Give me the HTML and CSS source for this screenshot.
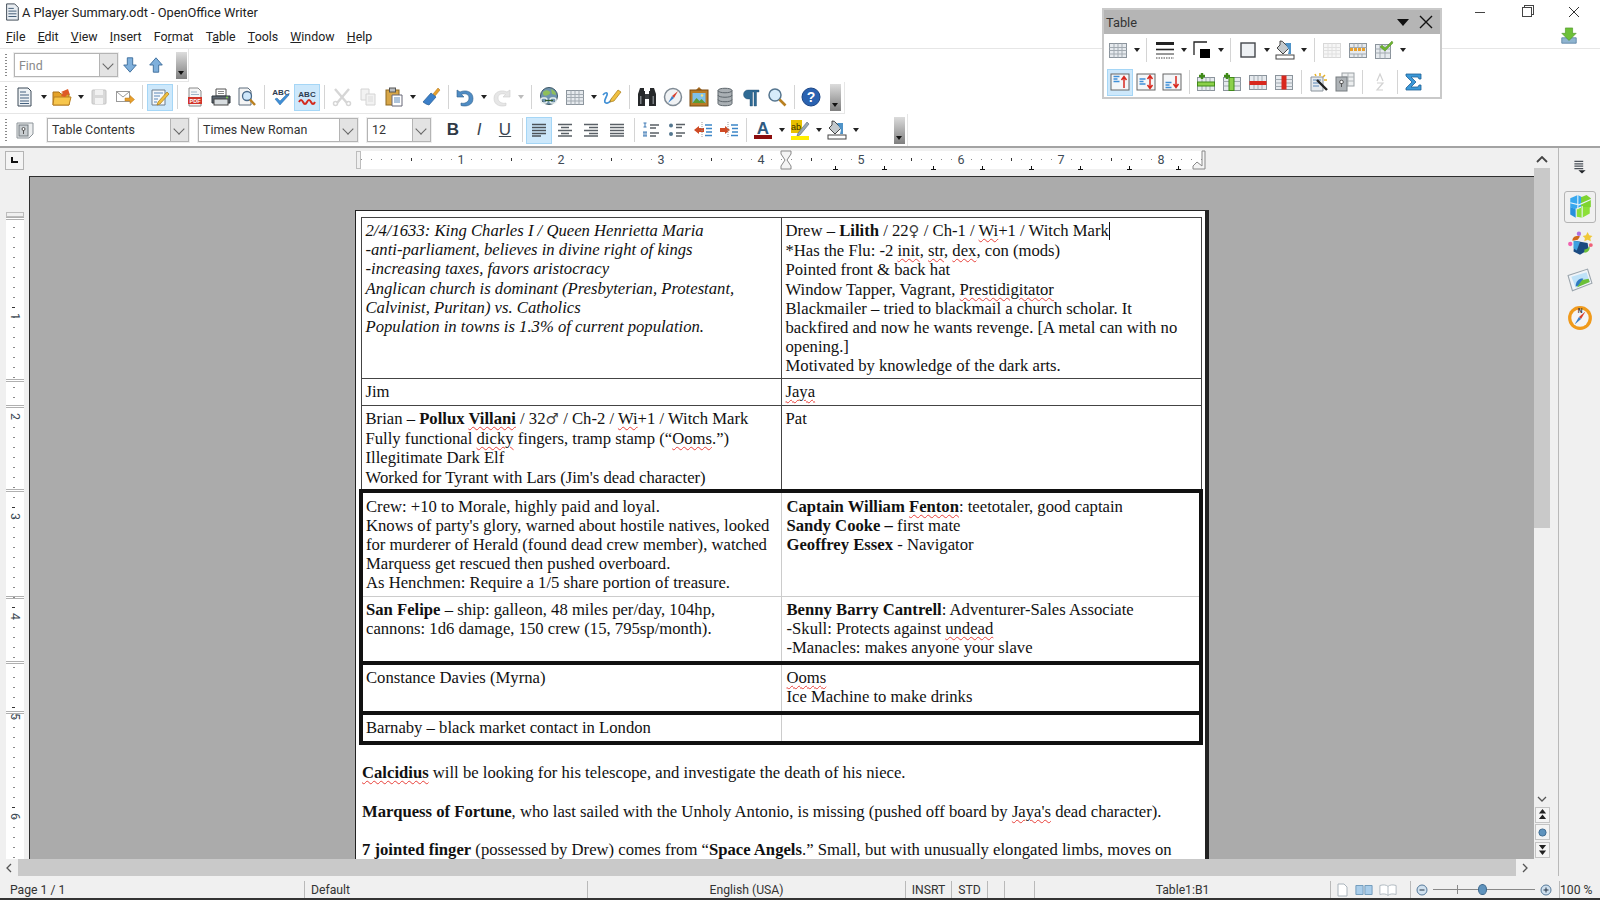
FILE: index.html
```html
<!DOCTYPE html>
<html lang="en">

<head>
    <meta charset="UTF-8">
    <title>A Player Summary.odt - OpenOffice Writer</title>
    <link rel="stylesheet" href="styles.css">
</head>

<body>
    <!-- icon sprite -->
    <svg class="sprite" xmlns="http://www.w3.org/2000/svg">
        <symbol id="i-new" viewBox="0 0 20 20"><path d="M3 1h10l3 3v15H3z" fill="#eef2f5" stroke="#3c4a58"/><path d="M5 5h6M5 8h9M5 11h9M5 14h9M5 16.500h9" stroke="#44617f"/></symbol>
        <symbol id="i-open" viewBox="0 0 20 20"><path d="M1 5h6l2 2h8v11H1z" fill="#e5a228" stroke="#a8701a"/><path d="M2 10h17l-2 8H1z" fill="#f7c64c" stroke="#b98020"/><path d="M9 9l2-3-2-1 7-3 2 6-2-1-3 3z" fill="#de5a26"/></symbol>
        <symbol id="i-save" viewBox="0 0 20 20"><rect x="3" y="3" width="14" height="14" rx="1" fill="#d9d9d9" stroke="#c4c4c4"/><rect x="6" y="3" width="8" height="5" fill="#f1f1f1"/><rect x="6" y="11" width="8" height="6" fill="#f4f4f4"/></symbol>
        <symbol id="i-mail" viewBox="0 0 20 20"><rect x="1.500" y="4.500" width="13" height="10" fill="#fff" stroke="#9a9a9a"/><path d="M2 5l6 5 6-5" fill="none" stroke="#9a9a9a"/><path d="M10 11h5V8.500l4.500 4-4.500 4V14h-5z" fill="#e8a02c" stroke="#b87818" stroke-width=".5"/></symbol>
        <symbol id="i-edit" viewBox="0 0 20 20"><path d="M2 3h13v15H2z" fill="#f5f8fb" stroke="#6c7c8c"/><path d="M4 6h9M4 9h6M4 12h4M4 15h3" stroke="#5b87b8"/><path d="M8 15l9-10 2 2-9 10-3 1z" fill="#f0c040" stroke="#a87a18" stroke-width=".7"/></symbol>
        <symbol id="i-pdf" viewBox="0 0 20 20"><path d="M4 1h9l3 3v15H4z" fill="#f6f6f6" stroke="#8a8a8a"/><path d="M6 5h6M6 7.500h8" stroke="#9fb4c8"/><rect x="3" y="10" width="14" height="7" fill="#d2352a"/><text x="10" y="15.500" font-size="5.500" font-weight="700" fill="#fff" text-anchor="middle" font-family="Liberation Sans, sans-serif">PDF</text></symbol>
        <symbol id="i-print" viewBox="0 0 20 20"><path d="M5 2h10v7H5z" fill="#fff" stroke="#555"/><path d="M7 4.500h6M7 6.500h6" stroke="#888"/><path d="M1 9h18v7H1z" fill="#5c6670" stroke="#2f363c"/><rect x="3" y="12" width="14" height="6" fill="#d8dde0" stroke="#444"/><circle cx="16" cy="10.500" r="1" fill="#7ad04a"/></symbol>
        <symbol id="i-preview" viewBox="0 0 20 20"><path d="M2 1h9l3 3v14H2z" fill="#f5f5f5" stroke="#5f6f7f"/><circle cx="10" cy="9" r="4.500" fill="#cfe7fa" stroke="#4a6a8a" stroke-width="1.300"/><path d="M13 12.500l5 5.500" stroke="#b98020" stroke-width="2.400"/></symbol>
        <symbol id="i-spell" viewBox="0 0 20 20"><text x="10" y="8" font-size="8" font-weight="700" fill="#2c3c50" text-anchor="middle" font-family="Liberation Sans, sans-serif">ABC</text><path d="M4 12l5 6 9-10-2-1-7 7-3-3z" fill="#3f8fd6" stroke="#2a6aa8" stroke-width=".5"/></symbol>
        <symbol id="i-autospell" viewBox="0 0 20 20"><text x="10" y="10" font-size="8" font-weight="700" fill="#2c3c50" text-anchor="middle" font-family="Liberation Sans, sans-serif">ABC</text><path d="M2 15q2-4 4 0t4 0 4 0 4 0" fill="none" stroke="#d42a1e" stroke-width="2"/></symbol>
        <symbol id="i-cut" viewBox="0 0 20 20"><path d="M3 2l12 14M17 2L5 16" stroke="#d6d6d6" stroke-width="2.400"/><circle cx="3.500" cy="16.500" r="2" fill="none" stroke="#d6d6d6" stroke-width="1.500"/><circle cx="16.500" cy="16.500" r="2" fill="none" stroke="#d6d6d6" stroke-width="1.500"/></symbol>
        <symbol id="i-copy" viewBox="0 0 20 20"><path d="M3 2h8v11H3z" fill="#f2f2f2" stroke="#d4d4d4"/><path d="M8 7h9v11H8z" fill="#f2f2f2" stroke="#d4d4d4"/><path d="M10 10h5M10 12h5M10 14h5" stroke="#dcdcdc"/></symbol>
        <symbol id="i-paste" viewBox="0 0 20 20"><rect x="2" y="3" width="13" height="15" fill="#d7a648" stroke="#8d6820"/><rect x="5.500" y="1" width="6" height="4" fill="#b8bcc0" stroke="#555"/><path d="M8 8h10v11H8z" fill="#fff" stroke="#667"/><path d="M10 11h6M10 13h6M10 15h6" stroke="#5b87b8"/></symbol>
        <symbol id="i-brush" viewBox="0 0 20 20"><path d="M12 7l5-6 2 2-5 6z" fill="#e8a02c" stroke="#a87018" stroke-width=".5"/><path d="M2 15l8-9 5 4-7 8-3-1z" fill="#3b7fc8" stroke="#235a94" stroke-width=".7"/></symbol>
        <symbol id="i-undo" viewBox="0 0 20 20"><path d="M2 3v7h7L6.500 7.500C9 6 14 6.500 14 11s-5 6-8 5v2.500c5 1.500 12 0 12-7C18 4 10 2.500 5 5z" fill="#4f8cc4" stroke="#2f5f8c" stroke-width=".6"/></symbol>
        <symbol id="i-redo" viewBox="0 0 20 20"><path d="M18 3v7h-7l2.500-2.500C11 6 6 6.500 6 11s5 6 8 5v2.500c-5 1.500-12 0-12-7C2 4 10 2.500 15 5z" fill="#e6e6e6" stroke="#cfcfcf" stroke-width=".6"/></symbol>
        <symbol id="i-globe" viewBox="0 0 20 20"><circle cx="10" cy="9" r="8.500" fill="#6f94ae" stroke="#3c5664"/><path d="M4 5q3-3 6-1t-1 4-5-1zM12 2q5 2 5 6l-4-1z" fill="#8fbf5a"/><rect x="2" y="11" width="6" height="5" rx="2" fill="none" stroke="#e8f0f0" stroke-width="1.400"/><rect x="11" y="11" width="6" height="5" rx="2" fill="none" stroke="#e8f0f0" stroke-width="1.400"/><path d="M6 13.500h8" stroke="#2f5a2a" stroke-width="1.300"/></symbol>
        <symbol id="i-table" viewBox="0 0 20 20"><rect x="1.500" y="3.500" width="17" height="14" fill="#e6eaee" stroke="#8b949c"/><path d="M1.500 7.500h17M1.500 10.500h17M1.500 14h17M6 3.500v14M10 3.500v14M14 3.500v14" stroke="#a3abb2"/></symbol>
        <symbol id="i-draw" viewBox="0 0 20 20"><path d="M1 8c2-3 5-3 4 0s-4 7-1 8 5-3 7-5" fill="none" stroke="#3f8fd6" stroke-width="1.700"/><path d="M9 12l7-9 3 2-7 9-4 1z" fill="#f0c040" stroke="#a87a18" stroke-width=".7"/></symbol>
        <symbol id="i-binoc" viewBox="0 0 20 20"><path d="M3 1h4v3h1v15H1V7zM17 1h-4v3h-1v15h7V7z" fill="#26282a"/><rect x="8" y="7" width="4" height="5" fill="#3c3f42"/><path d="M3 9h1.500v8H3zM15.500 9H17v8h-1.500z" fill="#7b8084"/></symbol>
        <symbol id="i-compass" viewBox="0 0 20 20"><circle cx="10" cy="10" r="8.500" fill="#f0f2f4" stroke="#7f8a94" stroke-width="1.500"/><path d="M15 4l-6 5 2 2z" fill="#d8402f"/><path d="M5 16l4-7 2 2z" fill="#3b7fc8"/></symbol>
        <symbol id="i-gallery" viewBox="0 0 20 20"><path d="M10 0l3 3H7z" fill="#a66a20"/><rect x="1" y="3" width="18" height="16" fill="#b87a26" stroke="#7a4a10"/><rect x="3.500" y="6" width="13" height="10" fill="#7fc0ea"/><path d="M3.500 16l4-5 3 3 2-2 4 4z" fill="#5a9a34"/><circle cx="13" cy="8.500" r="1.200" fill="#f6e27a"/></symbol>
        <symbol id="i-db" viewBox="0 0 20 20"><path d="M3 3.500C3 .5 17 .5 17 3.500v13c0 3-14 3-14 0z" fill="#aab0b4" stroke="#5e666c"/><path d="M3 3.500c0 3 14 3 14 0M3 8c0 3 14 3 14 0M3 12.500c0 3 14 3 14 0" fill="none" stroke="#5e666c"/></symbol>
        <symbol id="i-para" viewBox="0 0 20 20"><path d="M9 3H7a4.500 4.500 0 000 9h2v7h2.500V5H13v14h2.500V5H18V3z" fill="#2f6a94" stroke="#1e4a6c" stroke-width=".4"/></symbol>
        <symbol id="i-zoom" viewBox="0 0 20 20"><circle cx="8" cy="8" r="6" fill="#d6ebfa" stroke="#55758f" stroke-width="1.500"/><path d="M12.500 12.500l6 6" stroke="#b98020" stroke-width="2.600"/></symbol>
        <symbol id="i-help" viewBox="0 0 20 20"><circle cx="10" cy="10" r="9" fill="#2a62b0" stroke="#1a4484"/><text x="10" y="15" font-size="14" font-weight="700" fill="#fff" text-anchor="middle" font-family="Liberation Sans, sans-serif">?</text></symbol>
        <symbol id="i-style" viewBox="0 0 20 20"><path d="M2 3h16v11l-4 4H2z" fill="#eceeef" stroke="#8c9398"/><rect x="4" y="5" width="9" height="11" fill="#c8cdd0" stroke="#737a80"/><circle cx="8.500" cy="9" r="1.500" fill="#fff" stroke="#555"/><path d="M8.500 10v4" stroke="#555"/></symbol>
        <symbol id="i-left" viewBox="0 0 20 20"><path d="M3 4.500h14M3 7.500h14M3 10.500h14M3 13.500h14M3 16h9" stroke="#4b5258" stroke-width="1.400"/></symbol>
        <symbol id="i-center" viewBox="0 0 20 20"><path d="M3 4.500h14M6 7.500h8M3 10.500h14M6 13.500h8M3 16h14" stroke="#5a6066" stroke-width="1.400"/></symbol>
        <symbol id="i-right" viewBox="0 0 20 20"><path d="M3 4.500h14M8 7.500h9M3 10.500h14M8 13.500h9M3 16h14" stroke="#5a6066" stroke-width="1.400"/></symbol>
        <symbol id="i-just" viewBox="0 0 20 20"><path d="M3 4.500h14M3 7.500h14M3 10.500h14M3 13.500h14M3 16h14" stroke="#5a6066" stroke-width="1.400"/></symbol>
        <symbol id="i-num" viewBox="0 0 20 20"><path d="M4 3v4M2.500 3h3M2.500 7h3M3 12v4M5 12v4M2 12h4M2 16h4" stroke="#3c78b4"/><path d="M9 5h9M9 8h6M9 13h9M9 16h6" stroke="#5a6066" stroke-width="1.400"/></symbol>
        <symbol id="i-bullets" viewBox="0 0 20 20"><circle cx="4" cy="5.500" r="2" fill="#53768f"/><circle cx="4" cy="14" r="2" fill="#53768f"/><path d="M9 4.500h9M9 7.500h6M9 13h9M9 16h6" stroke="#5a6066" stroke-width="1.400"/></symbol>
        <symbol id="i-ind-minus" viewBox="0 0 20 20"><path d="M1 10l5-4v2h5v4H6v2z" fill="#cf4a24"/><path d="M9 2v16" stroke="#999" stroke-dasharray="1 1"/><path d="M12 5h7M13 8.500h6M13 12h6M12 15.500h7" stroke="#3c86c8" stroke-width="1.500"/></symbol>
        <symbol id="i-ind-plus" viewBox="0 0 20 20"><path d="M11 10L6 6v2H1v4h5v2z" fill="#cf4a24"/><path d="M9 2v16" stroke="#999" stroke-dasharray="1 1"/><path d="M12 5h7M13 8.500h6M13 12h6M12 15.500h7" stroke="#3c86c8" stroke-width="1.500"/></symbol>
        <symbol id="i-fontcolor" viewBox="0 0 20 20"><text x="10" y="14" font-size="17" font-weight="700" fill="#2f5a80" text-anchor="middle" font-family="Liberation Sans, sans-serif">A</text><rect x="1" y="15" width="18" height="4" fill="#8c0d0d"/></symbol>
        <symbol id="i-hilite" viewBox="0 0 20 20"><rect x="1" y="0" width="11" height="13" fill="#e8c000"/><text x="6" y="10" font-size="9" fill="#3a3000" text-anchor="middle" font-family="Liberation Sans, sans-serif">ab</text><path d="M8 13l9-11 2 2-9 11-3 1z" fill="#98a8b4" stroke="#5a6670" stroke-width=".6"/><rect x="1" y="16" width="18" height="4" fill="#ffee00"/></symbol>
        <symbol id="i-bgfill" viewBox="0 0 20 20"><path d="M5 1a4 4 0 014 2l5 5-6 6-6-6 3-3z" fill="#c4c9cc" stroke="#444"/><path d="M10 3h6v11h-3l1-4z" fill="#4f93c8"/><rect x="1" y="15" width="18" height="4" fill="#fff" stroke="#444"/></symbol>
        <symbol id="i-lines" viewBox="0 0 20 20"><path d="M1 3.500h18" stroke="#222" stroke-width="3"/><path d="M1 9.500h18" stroke="#222" stroke-width="1.600"/><path d="M1 14h18" stroke="#333"/><path d="M1 18h18" stroke="#444" stroke-dasharray="1.500 1"/></symbol>
        <symbol id="i-linecolor" viewBox="0 0 20 20"><path d="M2 15V2h13" fill="none" stroke="#222" stroke-width="1.300"/><path d="M4 4h11v9H4z" fill="#fff"/><rect x="8" y="9" width="10" height="9" fill="#000"/></symbol>
        <symbol id="i-border" viewBox="0 0 20 20"><rect x="3" y="3" width="14" height="14" fill="#eef1f4" stroke="#43474b" stroke-width="1.400"/></symbol>
        <symbol id="i-merge" viewBox="0 0 20 20"><rect x="1.500" y="3.500" width="17" height="14" fill="#f6f6f6" stroke="#d8d8d8"/><path d="M1.500 7.500h17M1.500 10.500h17M1.500 14h17M6 3.500v14M10 3.500v14M14 3.500v14" stroke="#e0e0e0"/></symbol>
        <symbol id="i-split" viewBox="0 0 20 20"><rect x="1.500" y="3.500" width="17" height="14" fill="#e6eaee" stroke="#8b949c"/><path d="M1.500 7.500h17M1.500 14h17M6 3.500v4M10 3.500v4M14 3.500v4M6 14v3.500M10 14v3.500M14 14v3.500" stroke="#a3abb2"/><path d="M2 9.500h16" stroke="#e8a02c" stroke-width="3" stroke-dasharray="3 1"/></symbol>
        <symbol id="i-optimize" viewBox="0 0 20 20"><rect x="1.500" y="4.500" width="15" height="14" fill="#e6eaee" stroke="#8b949c"/><path d="M1.500 9h15M1.500 13h15M6 4.500v14M11 4.500v14" stroke="#a3abb2"/><path d="M8 5l3 3 7-7 1 2-8 8-5-4z" fill="#6cb52e" stroke="#3f7a14" stroke-width=".4"/></symbol>
        <symbol id="i-top" viewBox="0 0 20 20"><rect x="1" y="2" width="18" height="16" fill="#f4f6f8" stroke="#666"/><path d="M3.500 4.500h6M3.500 7h4M3.500 9.500h6" stroke="#3f8fd6" stroke-width="1.300"/><path d="M14 16V6M11.500 8L14 4.500 16.500 8" fill="none" stroke="#d8281e" stroke-width="1.500"/></symbol>
        <symbol id="i-mid" viewBox="0 0 20 20"><rect x="1" y="2" width="18" height="16" fill="#f4f6f8" stroke="#666"/><path d="M3.500 7h6M3.500 9.500h4M3.500 12h6" stroke="#3f8fd6" stroke-width="1.300"/><path d="M14 4.500v11M11.500 7L14 3.500 16.500 7M11.500 13L14 16.500 16.500 13" fill="none" stroke="#d8281e" stroke-width="1.500"/></symbol>
        <symbol id="i-bottom" viewBox="0 0 20 20"><rect x="1" y="2" width="18" height="16" fill="#f4f6f8" stroke="#666"/><path d="M3.500 10.500h6M3.500 13h4M3.500 15.500h6" stroke="#3f8fd6" stroke-width="1.300"/><path d="M14 4v10M11.500 12L14 15.500 16.500 12" fill="none" stroke="#d8281e" stroke-width="1.500"/></symbol>
        <symbol id="i-insrow" viewBox="0 0 20 20"><rect x="1.500" y="5.500" width="17" height="13" fill="#e6eaee" stroke="#8b949c"/><path d="M6 5.500v13M10 5.500v13M14 5.500v13" stroke="#a3abb2"/><rect x="1.500" y="10" width="17" height="4" fill="#8cd04a" stroke="#3f8a18"/><path d="M3 4h6M6 1v6" stroke="#3f8a18" stroke-width="2.400"/></symbol>
        <symbol id="i-inscol" viewBox="0 0 20 20"><rect x="1.500" y="5.500" width="17" height="13" fill="#e6eaee" stroke="#8b949c"/><path d="M1.500 9.500h17M1.500 14h17" stroke="#a3abb2"/><rect x="7" y="5.500" width="5" height="13" fill="#8cd04a" stroke="#3f8a18"/><path d="M2 4h6M5 1v6" stroke="#3f8a18" stroke-width="2.400"/></symbol>
        <symbol id="i-delrow" viewBox="0 0 20 20"><rect x="1.500" y="3.500" width="17" height="14" fill="#e6eaee" stroke="#8b949c"/><path d="M6 3.500v14M10 3.500v14M14 3.500v14" stroke="#a3abb2"/><rect x="1.500" y="9" width="17" height="4" fill="#d8281e"/></symbol>
        <symbol id="i-delcol" viewBox="0 0 20 20"><rect x="1.500" y="3.500" width="17" height="14" fill="#e6eaee" stroke="#8b949c"/><path d="M1.500 7.500h17M1.500 11h17M1.500 14.500h17" stroke="#a3abb2"/><rect x="7.500" y="3.500" width="5" height="14" fill="#d8281e"/></symbol>
        <symbol id="i-wand" viewBox="0 0 20 20"><path d="M2 5h12v14H2z" fill="#e6eaee" stroke="#8b949c"/><path d="M4 8h8M4 11h8M4 14h6" stroke="#5b87b8"/><path d="M8 8l10 10" stroke="#222" stroke-width="2.400"/><path d="M6 2l1 2M11 1v3M16 3l-2 2M18 8h-3" stroke="#e8b020" stroke-width="1.500"/></symbol>
        <symbol id="i-props" viewBox="0 0 20 20"><rect x="7" y="1" width="12" height="13" fill="#eceeef" stroke="#9aa0a4"/><path d="M7 5h12M7 9h12M13 1v13" stroke="#b0b5b8"/><rect x="1" y="5" width="11" height="14" fill="#aeb3b7" stroke="#767c80"/><circle cx="6.500" cy="10" r="1.800" fill="#fff" stroke="#555"/><path d="M6.500 11v4" stroke="#555"/></symbol>
        <symbol id="i-sort" viewBox="0 0 20 20"><path d="M7 9l3-7 3 7M7 11h6l-6 7h6" fill="none" stroke="#d2d2d2" stroke-width="1.200"/></symbol>
        <symbol id="i-sum" viewBox="0 0 20 20"><path d="M2 2h15v5h-2l-1-2H7l5 5-5 5h7l1-2h2v5H2v-2l6-6-6-6z" fill="#3a98d8" stroke="#1f5f94" stroke-width=".8"/></symbol>
        <symbol id="i-app" viewBox="0 0 20 20"><path d="M4 1h9l4 4v14H4z" fill="#e8edf2" stroke="#34404c"/><path d="M6 6h6M6 9h9M6 12h9M6 15h9" stroke="#34506c"/></symbol>
        <symbol id="i-update" viewBox="0 0 20 20"><path d="M2 12h16v6H2z" fill="#8fb4d0" stroke="#5d86a6"/><path d="M6 1h8v6h4l-8 8-8-8h4z" fill="#6cc038" stroke="#3f8a18" stroke-width=".6"/></symbol>
        <symbol id="i-deck-menu" viewBox="0 0 20 20"><path d="M3 3h11M3 6h11M3 9h11M3 12h11" stroke="#4a5058" stroke-width="1.500"/><path d="M8 14h9l-4.500 4z" fill="#22262a"/></symbol>
        <symbol id="i-props-deck" viewBox="0 0 24 24"><path d="M3 4l7-3 4 2v8l-7 3-4-2z" fill="#38a8ee"/><path d="M13 3l5-2 4 3v8l-8 3-1-2z" fill="#7ed430"/><path d="M3 12l5 2v8l-5-3z" fill="#2690dc"/><path d="M9 14l6-2 6 0v6l-7 4-5-1z" fill="#8ce038"/><path d="M10 1v13M3 8l8 2 11-5M14 11v11" stroke="#e8f4fa" fill="none"/></symbol>
        <symbol id="i-styles-deck" viewBox="0 0 24 24"><path d="M7 9l12 2 1 6-8 5-6-3z" fill="#1a4a80"/><path d="M6 9l6 1-3 8-3-2z" fill="#3da0e0"/><path d="M16 17c4 0 5-3 4-5 2 3 1 8-4 8z" fill="#6cc038"/><path d="M5 9c0-4 4-5 7-4l-2 3z" fill="#d06a1c"/><circle cx="3" cy="12" r="2" fill="#f060b0"/><circle cx="11" cy="2.500" r="2" fill="#b070e0"/><path d="M19 1l1.500 3 3 .5-2 2 .5 3-3-1.500-3 1.500.5-3-2-2 3-.5z" fill="#f0c838"/><circle cx="22" cy="13" r="1.800" fill="#f06078"/></symbol>
        <symbol id="i-gallery-deck" viewBox="0 0 24 24"><path d="M1 7l18-6 4 13-18 7z" fill="#f0f4f8" stroke="#9aa4ac"/><path d="M4 8l14-4 3 9-13 5z" fill="#bfe2f8"/><path d="M8 17c0-6 5-8 7-7l-3 6z" fill="#2f7ac0"/><path d="M9 18l12-5-1-3-6 1z" fill="#6cc038"/></symbol>
        <symbol id="i-nav-deck" viewBox="0 0 24 24"><circle cx="12" cy="12" r="11" fill="#f09a1c"/><circle cx="12" cy="12" r="8" fill="#f4f4f6"/><path d="M17 6l-6 5 2 2z" fill="#d8402f"/><path d="M7 18l4-7 2 2z" fill="#3b7fc8"/><text x="12" y="7.500" font-size="6" font-weight="700" fill="#333" text-anchor="middle" font-family="Liberation Sans, sans-serif">N</text></symbol>
    </svg>

    <div class="titlebar">
        <svg class="app-icon"><use href="#i-app"/></svg>
        <span class="title">A Player Summary.odt - OpenOffice Writer</span>
        <div class="win-controls">
            <span class="win-btn"><span class="win-min"></span></span>
            <span class="win-btn"><span class="win-restore"></span></span>
            <span class="win-btn"><svg class="win-close" viewBox="0 0 12 12"><path d="M1 1l10 10M11 1L1 11" stroke="#333"/></svg></span>
        </div>
    </div>

    <div class="menubar">
        <span class="menu-item"><u>F</u>ile</span>
        <span class="menu-item"><u>E</u>dit</span>
        <span class="menu-item"><u>V</u>iew</span>
        <span class="menu-item"><u>I</u>nsert</span>
        <span class="menu-item">Fo<u>r</u>mat</span>
        <span class="menu-item">T<u>a</u>ble</span>
        <span class="menu-item"><u>T</u>ools</span>
        <span class="menu-item"><u>W</u>indow</span>
        <span class="menu-item"><u>H</u>elp</span>
        <svg class="update-icon"><use href="#i-update"/></svg>
    </div>

    <div class="toolbar find-bar">
        <span class="grip"></span>
        <span class="combo find-combo"><span class="combo-text muted">Find</span><span class="combo-btn"></span></span>
        <span class="tb"><svg class="arrow-icon" viewBox="0 0 20 20"><path d="M7 2h6v8h4l-7 8-7-8h4z" fill="#7fb0dc" stroke="#3a6a98"/></svg></span>
        <span class="tb"><svg class="arrow-icon" viewBox="0 0 20 20"><path d="M7 18h6v-8h4l-7-8-7 8h4z" fill="#7fb0dc" stroke="#3a6a98"/></svg></span>
        <span class="handle"></span>
    </div>

    <div class="toolbar std-bar">
        <span class="grip"></span>
        <span class="tb"><svg><use href="#i-new"/></svg></span><span class="drop"></span>
        <span class="tb"><svg><use href="#i-open"/></svg></span><span class="drop"></span>
        <span class="tb"><svg><use href="#i-save"/></svg></span>
        <span class="tb"><svg><use href="#i-mail"/></svg></span>
        <span class="sep w9"></span>
        <span class="tb on"><svg><use href="#i-edit"/></svg></span>
        <span class="sep w9"></span>
        <span class="tb"><svg><use href="#i-pdf"/></svg></span>
        <span class="tb"><svg><use href="#i-print"/></svg></span>
        <span class="tb"><svg><use href="#i-preview"/></svg></span>
        <span class="sep"></span>
        <span class="tb"><svg><use href="#i-spell"/></svg></span>
        <span class="tb on"><svg><use href="#i-autospell"/></svg></span>
        <span class="sep w9"></span>
        <span class="tb"><svg><use href="#i-cut"/></svg></span>
        <span class="tb"><svg><use href="#i-copy"/></svg></span>
        <span class="tb"><svg><use href="#i-paste"/></svg></span><span class="drop"></span>
        <span class="tb"><svg><use href="#i-brush"/></svg></span>
        <span class="sep"></span>
        <span class="tb"><svg><use href="#i-undo"/></svg></span><span class="drop"></span>
        <span class="tb"><svg><use href="#i-redo"/></svg></span><span class="drop drop-off"></span>
        <span class="sep w10"></span>
        <span class="tb"><svg><use href="#i-globe"/></svg></span>
        <span class="tb"><svg><use href="#i-table"/></svg></span><span class="drop"></span>
        <span class="tb"><svg><use href="#i-draw"/></svg></span>
        <span class="sep w9"></span>
        <span class="tb"><svg><use href="#i-binoc"/></svg></span>
        <span class="tb"><svg><use href="#i-compass"/></svg></span>
        <span class="tb"><svg><use href="#i-gallery"/></svg></span>
        <span class="tb"><svg><use href="#i-db"/></svg></span>
        <span class="tb"><svg><use href="#i-para"/></svg></span>
        <span class="tb"><svg><use href="#i-zoom"/></svg></span>
        <span class="sep"></span>
        <span class="tb"><svg><use href="#i-help"/></svg></span>
        <span class="handle"></span>
    </div>

    <div class="toolbar fmt-bar">
        <span class="grip"></span>
        <span class="tb"><svg><use href="#i-style"/></svg></span>
        <span class="combo style-combo"><span class="combo-text">Table Contents</span><span class="combo-btn"></span></span>
        <span class="combo font-combo"><span class="combo-text">Times New Roman</span><span class="combo-btn"></span></span>
        <span class="combo size-combo"><span class="combo-text">12</span><span class="combo-btn"></span></span>
        <span class="tb fmt-letter first-letter"><b>B</b></span>
        <span class="tb fmt-letter"><i>I</i></span>
        <span class="tb fmt-letter"><u>U</u></span>
        <span class="sep"></span>
        <span class="tb on"><svg><use href="#i-left"/></svg></span>
        <span class="tb"><svg><use href="#i-center"/></svg></span>
        <span class="tb"><svg><use href="#i-right"/></svg></span>
        <span class="tb"><svg><use href="#i-just"/></svg></span>
        <span class="sep"></span>
        <span class="tb"><svg><use href="#i-num"/></svg></span>
        <span class="tb"><svg><use href="#i-bullets"/></svg></span>
        <span class="tb"><svg><use href="#i-ind-minus"/></svg></span>
        <span class="tb"><svg><use href="#i-ind-plus"/></svg></span>
        <span class="sep"></span>
        <span class="tb"><svg><use href="#i-fontcolor"/></svg></span><span class="drop"></span>
        <span class="tb"><svg><use href="#i-hilite"/></svg></span><span class="drop"></span>
        <span class="tb"><svg><use href="#i-bgfill"/></svg></span><span class="drop"></span>
        <span class="handle"></span>
    </div>

    <!-- floating Table toolbar -->
    <div class="float-toolbar">
        <div class="float-title">
            <span>Table</span>
            <span class="float-menu"></span>
            <svg class="float-close" viewBox="0 0 14 14"><path d="M1 1l12 12M13 1L1 13" stroke="#111" stroke-width="1.400"/></svg>
        </div>
        <div class="float-row">
            <span class="tb"><svg><use href="#i-table"/></svg></span><span class="drop"></span>
            <span class="sep"></span>
            <span class="tb push2"><svg><use href="#i-lines"/></svg></span><span class="drop"></span>
            <span class="tb"><svg><use href="#i-linecolor"/></svg></span><span class="drop"></span>
            <span class="sep w9"></span>
            <span class="tb"><svg><use href="#i-border"/></svg></span><span class="drop"></span>
            <span class="tb"><svg><use href="#i-bgfill"/></svg></span><span class="drop"></span>
            <span class="sep w10"></span>
            <span class="tb"><svg><use href="#i-merge"/></svg></span>
            <span class="tb"><svg><use href="#i-split"/></svg></span>
            <span class="tb"><svg><use href="#i-optimize"/></svg></span><span class="drop"></span>
        </div>
        <div class="float-row second">
            <span class="tb on"><svg><use href="#i-top"/></svg></span>
            <span class="tb"><svg><use href="#i-mid"/></svg></span>
            <span class="tb"><svg><use href="#i-bottom"/></svg></span>
            <span class="sep"></span>
            <span class="tb"><svg><use href="#i-insrow"/></svg></span>
            <span class="tb"><svg><use href="#i-inscol"/></svg></span>
            <span class="tb"><svg><use href="#i-delrow"/></svg></span>
            <span class="tb"><svg><use href="#i-delcol"/></svg></span>
            <span class="sep w9"></span>
            <span class="tb"><svg><use href="#i-wand"/></svg></span>
            <span class="tb"><svg><use href="#i-props"/></svg></span>
            <span class="sep w9"></span>
            <span class="tb"><svg><use href="#i-sort"/></svg></span>
            <span class="sep"></span>
            <span class="tb"><svg><use href="#i-sum"/></svg></span>
        </div>
    </div>

    <div class="workspace">
        <div class="editor">
            <div class="editor-top">
                <div class="editor-main">
                    <div class="ruler-row">
                        <span class="corner-btn"><span class="corner-mark"></span></span>
                        <div class="h-ruler">
                            <span class="margin-box"></span>
                            <div class="h-numbers">
                                <span>1</span><span>2</span><span>3</span><span>4</span><span>5</span><span>6</span><span>7</span><span>8</span>
                            </div>
                            <div class="tab-stops">
                                <i></i><i></i><i></i><i></i><i></i><i></i><i></i><i></i>
                            </div>
                            <svg class="col-marker" viewBox="0 0 12 20"><path d="M1 1h10v3L7 10l4 6v3H1v-3l4-6-4-6z" fill="#f4f4f4" stroke="#888"/></svg>
                            <svg class="right-marker" viewBox="0 0 14 20"><path d="M10 1h3v18H1v-3l4-4 5 4z" fill="#f4f4f4" stroke="#888"/></svg>
                        </div>
                    </div>
                    <div class="doc-row">
                        <div class="v-ruler">
                            <div class="v-numbers">
                                <span>1</span><span>2</span><span>3</span><span>4</span><span>5</span><span>6</span>
                            </div>
                            <span class="v-sect s1"></span>
                            <span class="v-sect s2"></span>
                            <span class="v-sect s3"></span>
                            <span class="v-sect s4"></span>
                            <span class="v-sect s5"></span>
                            <span class="v-sect s6"></span>
                            <span class="v-sect s7"></span>
                            <span class="v-sect s8"></span>
                        </div>
                        <div class="doc-area">
                            <div class="page">
                                <table class="sheet">
                                    <tr class="r1">
                                        <td class="notes">2/4/1633: King Charles I / Queen Henrietta Maria<br>-anti-parliament, believes in divine right of kings<br>-increasing taxes, favors aristocracy<br>Anglican church is dominant (Presbyterian, Protestant,<br>Calvinist, Puritan) vs. Catholics<br>Population in towns is 1.3% of current population.</td>
                                        <td>Drew &ndash; <b>Lilith</b> / 22<span class="sym">&#9792;</span> / Ch-1 / <span class="sp">Wi</span>+1 / Witch Mark<span class="caret"></span><br>*Has the Flu: -2 <span class="sp">init</span>, <span class="sp">str</span>, <span class="sp">dex</span>, con (mods)<br>Pointed front &amp; back hat<br>Window Tapper, Vagrant, <span class="sp">Prestidigitator</span><br>Blackmailer &ndash; tried to blackmail a church scholar. It<br>backfired and now he wants revenge. [A metal can with no<br>opening.]<br>Motivated by knowledge of the dark arts.</td>
                                    </tr>
                                    <tr class="r2">
                                        <td>Jim</td>
                                        <td><span class="sp">Jaya</span></td>
                                    </tr>
                                    <tr class="r3">
                                        <td>Brian &ndash; <b>Pollux <span class="sp">Villani</span></b> / 32<span class="sym">&#9794;</span> / Ch-2 / <span class="sp">Wi</span>+1 / Witch Mark<br>Fully functional <span class="sp">dicky</span> fingers, tramp stamp (&ldquo;<span class="sp">Ooms</span>.&rdquo;)<br>Illegitimate Dark Elf<br>Worked for Tyrant with Lars (Jim's dead character)</td>
                                        <td>Pat</td>
                                    </tr>
                                    <tr class="r4 boxed">
                                        <td>Crew: +10 to Morale, highly paid and loyal.<br>Knows of party's glory, warned about hostile natives, looked<br>for murderer of Herald (found dead crew member), watched<br>Marquess get rescued then pushed overboard.<br>As Henchmen: Require a 1/5 share portion of treasure.</td>
                                        <td><b>Captain William <span class="sp">Fenton</span></b>: teetotaler, good captain<br><b>Sandy Cooke &ndash;</b> first mate<br><b>Geoffrey Essex</b> - Navigator</td>
                                    </tr>
                                    <tr class="r5 boxed">
                                        <td><b>San Felipe</b> &ndash; ship: galleon, 48 miles per/day, 104hp,<br>cannons: 1d6 damage, 150 crew (15, 795sp/month).</td>
                                        <td><b>Benny Barry Cantrell</b>: Adventurer-Sales Associate<br>-Skull: Protects against <span class="sp">undead</span><br>-Manacles: makes anyone your slave</td>
                                    </tr>
                                    <tr class="r6 boxed">
                                        <td>Constance Davies (Myrna)</td>
                                        <td><span class="sp">Ooms</span><br>Ice Machine to make drinks</td>
                                    </tr>
                                    <tr class="r7 boxed">
                                        <td>Barnaby &ndash; black market contact in London</td>
                                        <td></td>
                                    </tr>
                                </table>
                                <p class="para"><b class="sp">Calcidius</b> will be looking for his telescope, and investigate the death of his niece.</p>
                                <p class="para"><b>Marquess of Fortune</b>, who last sailed with the Unholy Antonio, is missing (pushed off board by <span class="sp">Jaya's</span> dead character).</p>
                                <p class="para"><b>7 jointed finger</b> (possessed by Drew) comes from &ldquo;<b>Space Angels</b>.&rdquo; Small, but with unusually elongated limbs, moves on</p>
                            </div>
                        </div>
                    </div>
                </div>
                <div class="v-scroll">
                    <span class="sb-arrow"><svg viewBox="0 0 12 7"><path d="M1 6l5-5 5 5" fill="none" stroke="#444" stroke-width="1.800"/></svg></span>
                    <span class="sb-thumb"></span>
                    <span class="sb-fill"></span>
                    <span class="sb-arrow sb-down"><svg viewBox="0 0 10 6"><path d="M1 1l4 4 4-4" fill="none" stroke="#555" stroke-width="1.300"/></svg></span>
                    <span class="nav-btn"><svg viewBox="0 0 10 12"><path d="M5 0l4 5H1zM5 6l4 5H1z" fill="#222"/></svg></span>
                    <span class="nav-btn"><svg viewBox="0 0 10 12"><circle cx="5" cy="6" r="4" fill="#5f93bd" stroke="#3a668c"/></svg></span>
                    <span class="nav-btn"><svg viewBox="0 0 10 12"><path d="M5 6L1 1h8zM5 12L1 7h8z" fill="#222"/></svg></span>
                </div>
            </div>
            <div class="h-scroll">
                <span class="hs-arrow"><svg viewBox="0 0 6 10"><path d="M5 1L1 5l4 4" fill="none" stroke="#555" stroke-width="1.300"/></svg></span>
                <span class="hs-track"></span>
                <span class="hs-arrow"><svg viewBox="0 0 6 10"><path d="M1 1l4 4-4 4" fill="none" stroke="#555" stroke-width="1.300"/></svg></span>
            </div>
        </div>
        <div class="sidebar">
            <svg class="deck-menu"><use href="#i-deck-menu"/></svg>
            <span class="deck-btn active"><svg><use href="#i-props-deck"/></svg></span>
            <span class="deck-btn"><svg><use href="#i-styles-deck"/></svg></span>
            <span class="deck-btn"><svg><use href="#i-gallery-deck"/></svg></span>
            <span class="deck-btn"><svg><use href="#i-nav-deck"/></svg></span>
        </div>
    </div>

    <div class="statusbar">
        <span class="st st-page">Page 1 / 1</span>
        <span class="st st-style">Default</span>
        <span class="st st-lang">English (USA)</span>
        <span class="st st-ins">INSRT</span>
        <span class="st st-sel">STD</span>
        <span class="st st-a"></span>
        <span class="st st-b"></span>
        <span class="st st-cell">Table1:B1</span>
        <span class="st st-views">
            <svg viewBox="0 0 14 14"><path d="M3 1h6l3 3v9H3z" fill="#fff" stroke="#aab4bc"/></svg>
            <svg class="wide" viewBox="0 0 20 14"><path d="M1 2h8v10H1zM11 2h8v10h-8z" fill="#a9cdea" stroke="#6b96b8"/></svg>
            <svg class="wide" viewBox="0 0 20 14"><path d="M10 3c-2-2-6-2-9-1v10c3-1 7-1 9 1 2-2 6-2 9-1V2c-3-1-7-1-9 1zM10 3v10" fill="#fff" stroke="#aab4bc"/></svg>
        </span>
        <span class="st st-zoom">
            <svg viewBox="0 0 12 12"><circle cx="6" cy="6" r="5" fill="#cfe0ee" stroke="#55799a"/><path d="M3.500 6h5" stroke="#234"/></svg>
            <span class="zoom-track"><span class="zoom-tick"></span><span class="zoom-knob"></span></span>
            <svg viewBox="0 0 12 12"><circle cx="6" cy="6" r="5" fill="#cfe0ee" stroke="#55799a"/><path d="M3.500 6h5M6 3.500v5" stroke="#234"/></svg>
        </span>
        <span class="st st-pct">100 %</span>
    </div>
</body>

</html>
```

FILE: styles.css
```css
* {
    box-sizing: border-box;
}

html,
body {
    margin: 0;
    height: 900px;
    overflow: hidden;
}

body {
    display: flex;
    flex-direction: column;
    position: relative;
    background-color: #fff;
    color: #222;
    font-family: Roboto, "Liberation Sans", sans-serif;
    font-size: 12.400px;
}

.sprite {
    display: none;
}

/* title + menu */
.titlebar {
    display: flex;
    align-items: center;
    height: 24px;
    flex: none;
}

.app-icon {
    width: 18px;
    height: 18px;
    margin-left: 3px;
}

.title {
    margin-left: 1px;
    font-size: 12.800px;
}

.win-controls {
    display: flex;
    margin-left: auto;
    margin-right: 3px;
}

.win-btn {
    display: flex;
    align-items: center;
    justify-content: center;
    width: 47px;
    height: 24px;
    color: #333;
}

.win-min {
    width: 10px;
    height: 1px;
    background-color: #444;
}

.win-restore {
    width: 10px;
    height: 10px;
    border: 1px solid #444;
    box-shadow: 2px -2px 0 -1px #fff, 2px -2px 0 0 #444;
}

.win-close {
    width: 12px;
    height: 12px;
}

.menubar {
    display: flex;
    align-items: center;
    flex: none;
    gap: 12.200px;
    height: 25px;
    padding-left: 6px;
    border-bottom: 1px solid #e6e6e6;
}

.update-icon {
    width: 18px;
    height: 18px;
    margin-left: auto;
    margin-right: 22px;
}

/* toolbars */
.toolbar {
    display: flex;
    align-items: center;
    flex: none;
    height: 32px;
    border-right: 1px solid #e6e6e6;
    border-bottom: 1px solid #e6e6e6;
}

.find-bar {
    width: 189px;
    height: 33px;
}

.std-bar {
    width: 845px;
    padding-bottom: 1px;
}

.fmt-bar {
    width: 908px;
    border-bottom: none;
}

.grip {
    flex: none;
    width: 12px;
    height: 22px;
    background: repeating-linear-gradient(#8a8a8a 0 1px, transparent 1px 3px) 5px 0 / 2px 100% no-repeat;
}

.tb {
    display: flex;
    flex: none;
    align-items: center;
    justify-content: center;
    width: 26px;
    height: 27px;
}

.tb svg {
    width: 20px;
    height: 20px;
}

.tb.on {
    background-color: #cde8fb;
    border: 1px solid #a5d6f6;
}

.tb.push2 {
    margin-left: 2px;
}

.tb svg.arrow-icon {
    width: 18px;
    height: 18px;
}

.drop {
    display: flex;
    flex: none;
    justify-content: center;
    width: 11px;
}

.drop::before {
    content: "";
    border-top: 4px solid #222;
    border-left: 3.500px solid transparent;
    border-right: 3.500px solid transparent;
}

.drop-off {
    opacity: 0.3;
}

.sep {
    flex: none;
    width: 8px;
    height: 24px;
    background: linear-gradient(#d4d4d4, #d4d4d4) center / 1px 100% no-repeat;
}

.sep.w9 {
    width: 9px;
}

.sep.w10 {
    width: 10px;
}

.handle {
    position: relative;
    flex: none;
    width: 11px;
    height: 27px;
    margin-left: 7px;
    background: linear-gradient(#dcdcdc, #7f7f7f);
}

.handle::after {
    content: "";
    position: absolute;
    left: 2px;
    bottom: 4px;
    border-top: 4px solid #111;
    border-left: 3.500px solid transparent;
    border-right: 3.500px solid transparent;
}

.std-bar .handle {
    margin-left: 6px;
}

.fmt-bar .handle {
    margin-left: 33px;
}

.combo {
    display: flex;
    flex: none;
    align-items: stretch;
    height: 24px;
    border: 1px solid #b4b4b4;
    box-shadow: 0 0 0 1px #eee;
}

.combo-text {
    flex: 1;
    padding-left: 4px;
    line-height: 22px;
    color: #333;
}

.combo-text.muted {
    padding-top: 1px;
    color: #8a8a8a;
}

.combo-btn {
    position: relative;
    width: 18px;
    background-color: #e3e3e3;
    border-left: 1px solid #b4b4b4;
}

.combo-btn::after {
    content: "";
    position: absolute;
    left: 4px;
    top: 6px;
    width: 7px;
    height: 7px;
    border-right: 1px solid #666;
    border-bottom: 1px solid #666;
    transform: rotate(45deg);
}

.find-combo {
    width: 104px;
    margin-left: 2px;
    margin-right: -1px;
}

.style-combo {
    width: 142px;
    margin-left: 9px;
}

.font-combo {
    width: 160px;
    margin-left: 9px;
}

.size-combo {
    width: 64px;
    margin-left: 9px;
}

.fmt-letter {
    font-family: "Liberation Sans", sans-serif;
    font-size: 17px;
    color: #3c4650;
}

.fmt-letter b {
    color: #2f3a46;
}

.first-letter {
    margin-left: 9px;
}

/* floating table toolbar */
.float-toolbar {
    position: absolute;
    left: 1102px;
    top: 8px;
    width: 340px;
    height: 91px;
    background-color: #fff;
    border: 2px solid #c9c9c9;
}

.float-title {
    display: flex;
    align-items: center;
    height: 24px;
    padding-left: 2px;
    background-color: #b5b5b5;
    font-size: 12.800px;
    color: #333;
}

.float-menu {
    margin-left: auto;
    border-top: 7px solid #111;
    border-left: 6px solid transparent;
    border-right: 6px solid transparent;
}

.float-close {
    width: 14px;
    height: 14px;
    margin: 0 7px 0 10px;
}

.float-row {
    display: flex;
    align-items: center;
    height: 32px;
    padding-left: 1px;
}

.float-row.second {
    padding-left: 3px;
}

/* editor */
.workspace {
    display: flex;
    flex: 1;
    min-height: 0;
    border-top: 2px solid #a3a3a3;
}

.editor {
    display: flex;
    flex-direction: column;
    width: 1558px;
    background-color: #f0f0f0;
}

.editor-top {
    display: flex;
    flex: 1;
    min-height: 0;
}

.editor-main {
    display: flex;
    flex-direction: column;
    width: 1534px;
}

.ruler-row {
    display: flex;
    flex: none;
    height: 28px;
    padding-top: 3px;
}

.corner-btn {
    position: relative;
    flex: none;
    width: 19px;
    height: 19px;
    margin-left: 5px;
    background-color: #f4f4f4;
    border: 1px solid #b4b4b4;
}

.corner-mark {
    position: absolute;
    left: 5px;
    top: 5px;
    width: 7px;
    height: 6px;
    border-left: 2px solid #111;
    border-bottom: 2px solid #111;
}

.h-ruler {
    position: relative;
    flex: none;
    width: 847px;
    height: 18px;
    margin-left: 332px;
    background:
        repeating-linear-gradient(90deg, #333 0 1px, transparent 1px 100px) 55px 7px / 100% 3px no-repeat,
        repeating-linear-gradient(90deg, #8a8a8a 0 1px, transparent 1px 10px) 5px 8px / 100% 1px no-repeat,
        #fff;
}

.margin-box {
    display: block;
    width: 5px;
    height: 100%;
    background-color: #f0f0f0;
    border: 1px solid #bdbdbd;
}

.h-numbers {
    position: absolute;
    left: 55px;
    top: 0;
    display: flex;
}

.h-numbers span {
    width: 100px;
    text-align: center;
    line-height: 17px;
    font-size: 12.500px;
    color: #3e4a55;
    background: linear-gradient(#fff, #fff) center / 10px 100% no-repeat;
}

.tab-stops {
    position: absolute;
    left: 479px;
    bottom: -1px;
    display: flex;
    gap: 48px;
}

.tab-stops i {
    position: relative;
    width: 1px;
    height: 4px;
    background-color: #111;
}

.tab-stops i::after {
    content: "";
    position: absolute;
    left: -2px;
    bottom: 0;
    width: 5px;
    height: 1px;
    background-color: #111;
}

.col-marker {
    position: absolute;
    left: 424px;
    top: -1px;
    width: 12px;
    height: 20px;
}

.right-marker {
    position: absolute;
    left: 836px;
    top: -1px;
    width: 14px;
    height: 20px;
}

.doc-row {
    display: flex;
    flex: 1;
    min-height: 0;
}

.v-ruler {
    position: relative;
    flex: none;
    width: 29px;
    padding-top: 36px;
    overflow: hidden;
}

.v-ruler::before {
    content: "";
    position: absolute;
    left: 6px;
    top: 40px;
    bottom: 0;
    width: 18px;
    background:
        repeating-linear-gradient(#333 0 1px, transparent 1px 100px) 6px 91px / 3px 100% no-repeat,
        repeating-linear-gradient(#8a8a8a 0 1px, transparent 1px 10px) 7px 1px / 2px 100% no-repeat,
        #fff;
}

.v-numbers {
    position: absolute;
    left: 6px;
    top: 91px;
    display: flex;
    flex-direction: column;
    z-index: 1;
}

.v-numbers span {
    display: flex;
    align-items: center;
    justify-content: center;
    width: 18px;
    height: 100px;
    writing-mode: vertical-rl;
    font-size: 12.500px;
    color: #3e4a55;
}

.v-sect {
    position: relative;
    display: block;
    width: 18px;
    margin-left: 6px;
    border-top: 3px double #b0b0b0;
}

.v-sect.s1 {
    height: 5px;
    border: 1px solid #bdbdbd;
    background-color: #f0f0f0;
}

.s2 {
    height: 162px;
}

.s3 {
    height: 26px;
}

.s4 {
    height: 84px;
}

.s5 {
    height: 107px;
}

.s6 {
    height: 65px;
}

.s7 {
    height: 50px;
}

.s8 {
    height: 30px;
}

.doc-area {
    flex: 1;
    min-width: 0;
    overflow: hidden;
    padding: 33px 0 0 325px;
    background-color: #ababab;
    border-top: 1px solid #2e2e2e;
    border-left: 1px solid #2e2e2e;
}

.page {
    width: 851px;
    height: 900px;
    padding: 6px 0 0 3px;
    background-color: #fff;
    border: 1px solid #222;
    box-shadow: 3px 0 0 #222;
    font-family: "Liberation Serif", "Times New Roman", serif;
    font-size: 16.670px;
    line-height: 19.200px;
    color: #111;
}

/* the document table */
.sheet {
    border-collapse: collapse;
    table-layout: fixed;
    width: 842px;
    margin-bottom: -1px;
}

.sheet td {
    width: 420px;
    padding: 3px 4px 0 4px;
    vertical-align: top;
    white-space: nowrap;
    border: 1px solid #444;
}

.r1 {
    height: 161px;
}

.r2 {
    height: 27px;
}

.r3 {
    height: 85px;
}

.notes {
    font-style: italic;
}

.boxed td {
    border-left-color: #ccc;
    border-right-color: #ccc;
    border-top: 4px solid #111;
    border-bottom: 4px solid #111;
    padding-left: 5px;
}

.boxed td:first-child {
    padding-left: 3px;
    border-left: 4px solid #111;
}

.boxed td:last-child {
    border-right: 4px solid #111;
}

.r4 td {
    height: 106px;
    padding-top: 4px;
    border-bottom: 1px solid #ccc;
}

.r5 td {
    height: 66px;
    border-top: 1px solid #ccc;
}

.r6 td {
    height: 50px;
}

.r7 td {
    height: 30px;
}

.sp {
    text-decoration: underline wavy #e8403a;
    text-decoration-thickness: 1px;
    text-underline-offset: 2px;
}

.sym {
    font-family: "DejaVu Sans", sans-serif;
    font-size: 15px;
    color: #444;
}

.caret {
    display: inline-block;
    width: 1px;
    height: 18px;
    vertical-align: -4px;
    background-color: #111;
}

.para {
    margin: 19.500px 0 0 3px;
    white-space: nowrap;
}

/* scrollbars */
.v-scroll {
    display: flex;
    flex-direction: column;
    flex: none;
    width: 16px;
    align-items: center;
}

.sb-arrow {
    display: flex;
    flex: none;
    align-items: center;
    justify-content: center;
    width: 16px;
    height: 20px;
    padding-top: 3px;
}

.sb-arrow svg {
    width: 12px;
    height: 7px;
}

.sb-thumb {
    flex: none;
    width: 16px;
    height: 360px;
    background-color: #c9c9c9;
}

.sb-fill {
    flex: 1;
}

.sb-down {
    height: 16px;
    padding-top: 0;
}

.sb-down svg {
    width: 10px;
    height: 6px;
}

.nav-btn {
    display: flex;
    flex: none;
    align-items: center;
    justify-content: center;
    width: 15px;
    height: 16px;
    margin-bottom: 1.500px;
    background-color: #f4f4f4;
    border: 1px solid #c4c4c4;
}

.nav-btn svg {
    width: 9px;
    height: 11px;
}

.h-scroll {
    display: flex;
    flex: none;
    height: 17px;
    width: 1534px;
}

.hs-arrow {
    display: flex;
    flex: none;
    align-items: center;
    justify-content: center;
    width: 18px;
}

.hs-arrow svg {
    width: 6px;
    height: 10px;
}

.hs-track {
    flex: 1;
    background-color: #c9c9c9;
}

/* sidebar */
.sidebar {
    display: flex;
    flex: 1;
    flex-direction: column;
    align-items: center;
    padding-top: 11px;
    background-color: #f0f0f0;
    border-left: 1px solid #b9b9b9;
}

.deck-menu {
    width: 16px;
    height: 16px;
    margin-bottom: 16px;
}

.deck-btn {
    display: flex;
    align-items: center;
    justify-content: center;
    width: 32px;
    height: 32px;
    margin-bottom: 5px;
}

.deck-btn.active {
    border: 1px solid #b4b4b4;
    border-radius: 3px;
}

.deck-btn svg {
    width: 26px;
    height: 26px;
}

/* status bar */
.statusbar {
    display: flex;
    flex: none;
    height: 24px;
    background-color: #f0f0f0;
    border-bottom: 2px solid #333;
    font-size: 12.200px;
    color: #333;
}

.st {
    display: flex;
    align-items: center;
    flex: none;
    height: 17px;
    margin-top: 5px;
    border-left: 1px solid #b9b9b9;
}

.st-page {
    width: 304px;
    padding-left: 10px;
    border-left: none;
}

.st-style {
    width: 283px;
    padding-left: 6px;
}

.st-lang {
    width: 318px;
    justify-content: center;
}

.st-ins {
    width: 46px;
    justify-content: center;
}

.st-sel {
    width: 36px;
    justify-content: center;
}

.st-a {
    width: 17px;
}

.st-b {
    width: 30px;
}

.st-cell {
    width: 296px;
    justify-content: center;
}

.st-views {
    width: 80px;
    padding-left: 4px;
    gap: 6px;
}

.st-views svg {
    width: 14px;
    height: 14px;
}

.st-views svg.wide {
    width: 18px;
}

.st-zoom {
    width: 149px;
    padding-left: 5px;
}

.st-zoom svg {
    width: 12px;
    height: 12px;
    flex: none;
}

.zoom-track {
    position: relative;
    width: 102px;
    height: 1px;
    margin: 0 5px;
    background-color: #888;
}

.zoom-tick {
    position: absolute;
    left: 24px;
    top: -4px;
    width: 1px;
    height: 9px;
    background-color: #888;
}

.zoom-knob {
    position: absolute;
    left: 45px;
    top: -5px;
    width: 9px;
    height: 11px;
    border-radius: 50%;
    background-color: #5f93bd;
    border: 1px solid #3a668c;
}

.st-pct {
    padding-left: 0;
}
```
